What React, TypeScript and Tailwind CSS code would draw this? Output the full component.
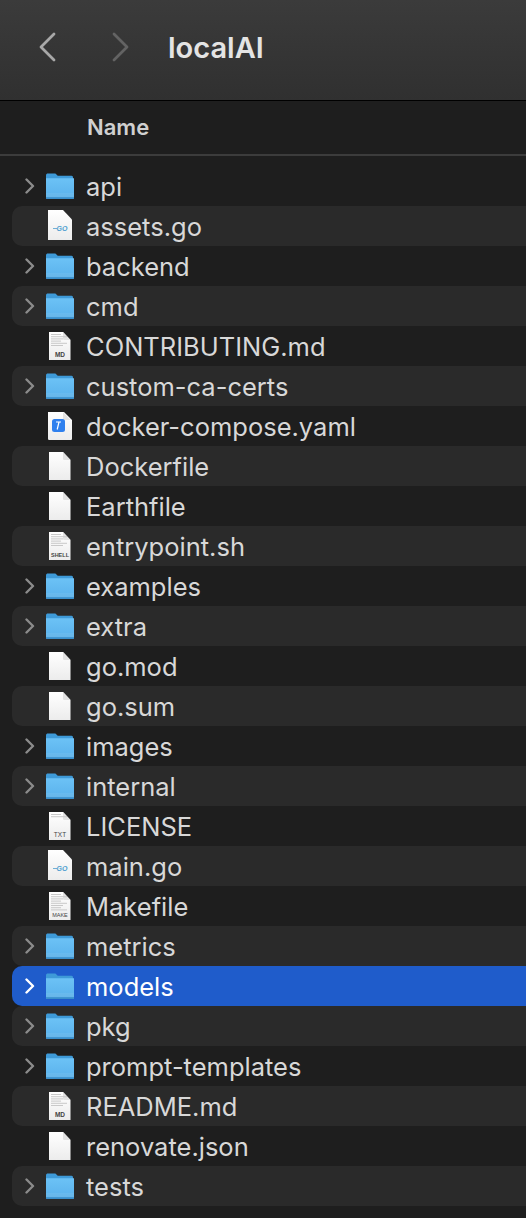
import clsx from "clsx";

type Kind = "folder" | "go" | "md" | "yaml" | "blank" | "shell" | "txt" | "make";

const files: { name: string; kind: Kind }[] = [
  { name: "api", kind: "folder" },
  { name: "assets.go", kind: "go" },
  { name: "backend", kind: "folder" },
  { name: "cmd", kind: "folder" },
  { name: "CONTRIBUTING.md", kind: "md" },
  { name: "custom-ca-certs", kind: "folder" },
  { name: "docker-compose.yaml", kind: "yaml" },
  { name: "Dockerfile", kind: "blank" },
  { name: "Earthfile", kind: "blank" },
  { name: "entrypoint.sh", kind: "shell" },
  { name: "examples", kind: "folder" },
  { name: "extra", kind: "folder" },
  { name: "go.mod", kind: "blank" },
  { name: "go.sum", kind: "blank" },
  { name: "images", kind: "folder" },
  { name: "internal", kind: "folder" },
  { name: "LICENSE", kind: "txt" },
  { name: "main.go", kind: "go" },
  { name: "Makefile", kind: "make" },
  { name: "metrics", kind: "folder" },
  { name: "models", kind: "folder" },
  { name: "pkg", kind: "folder" },
  { name: "prompt-templates", kind: "folder" },
  { name: "README.md", kind: "md" },
  { name: "renovate.json", kind: "blank" },
  { name: "tests", kind: "folder" },
];

const FolderIcon = ({ id }: { id: string }) => (
  <svg width="30" height="30" viewBox="0 0 30 30" className="shrink-0">
    <defs>
      <linearGradient id={id} x1="0" y1="0" x2="0" y2="1">
        <stop offset="0" stopColor="#6cc2f6" />
        <stop offset="0.7" stopColor="#5fb6ee" />
        <stop offset="1" stopColor="#56aae2" />
      </linearGradient>
    </defs>
    <path
      d="M1 4.500C1 3.100 1.800 2.500 3 2.500h6.500c1 0 1.500.4 2.200 1.200l1 1.100h13.800c1.200 0 1.500.8 1.500 2V10H1z"
      fill="#3e9ad8"
    />
    <path
      d="M1 7.200h28v19.300c0 1-.6 1.500-1.500 1.500h-25C1.600 28 1 27.500 1 26.500z"
      fill={`url(#${id})`}
    />
    <rect x="1" y="22.500" width="28" height="1" fill="#8ccdf3" opacity="0.5" />
    <rect x="1" y="24.500" width="28" height="1" fill="#8ccdf3" opacity="0.6" />
    <path d="M1 26.200h28v.6c0 .8-.6 1.200-1.500 1.200h-25c-.9 0-1.500-.4-1.500-1.200z" fill="#3a8fcb" />
  </svg>
);

const lineRows = [0, 1, 2, 3, 4, 5, 6, 7];

const DocIcon = ({ kind, id }: { kind: Kind; id: string }) => {
  const label =
    kind === "md" ? "MD" : kind === "shell" ? "SHELL" : kind === "txt" ? "TXT" : kind === "make" ? "MAKE" : "";
  const outline =
    kind === "go"
      ? "M3 -1H18l9 9.500V29H3z"
      : kind === "yaml"
        ? "M3 1H19l8 8V27.500c0 1-.6 1.500-1.500 1.500H4.500C3.600 29 3 28.500 3 27.500z"
        : "M4 1H18l7.500 8V29H4z";
  return (
    <svg width="30" height="30" viewBox="0 0 30 30" className="shrink-0 overflow-visible">
      <defs>
        <linearGradient id={id} x1="0" y1="0" x2="0" y2="1">
          <stop offset="0" stopColor="#ffffff" />
          <stop offset="1" stopColor="#ececec" />
        </linearGradient>
      </defs>
      <path d={outline} fill={`url(#${id})`} />
      {kind !== "go" && <path d="M18 1l7.500 8H19.500c-1 0-1.500-.5-1.500-1.500z" fill="#e2e2e2" />}
      {label &&
        lineRows.slice(0, kind === "txt" ? 2 : kind === "make" ? 8 : 6).map((r) => (
          <rect
            key={r}
            x="6"
            y={3 + r * 2.200}
            width={r % 3 === 0 ? 10 : r % 3 === 1 ? 16 : 12}
            height="1"
            fill="#c9c9c9"
          />
        ))}
      {label && (
        <text
          x="15"
          y="26"
          textAnchor="middle"
          fontFamily="'Liberation Sans', sans-serif"
          fontWeight={kind === "md" || kind === "shell" ? 700 : 400}
          fontSize={label.length > 3 ? 5.500 : 6.500}
          fill="#444444"
        >
          {label}
        </text>
      )}
      {kind === "go" && (
        <text
          x="17"
          y="20"
          textAnchor="middle"
          fontFamily="'Liberation Sans', sans-serif"
          fontWeight="700"
          fontStyle="italic"
          fontSize="7"
          fill="#4f9fd0"
        >
          GO
        </text>
      )}
      {kind === "go" && <rect x="8" y="17" width="4" height="0.800" fill="#4f9fd0" />}
      {kind === "yaml" && (
        <>
          <rect x="7" y="8" width="13" height="13" rx="2.500" fill="#2f80ee" />
          <path d="M11 11h5M14 11l-1.800 7.500" stroke="#fff" strokeWidth="1.200" fill="none" />
        </>
      )}
    </svg>
  );
};

const Chevron = ({ active }: { active: boolean }) => (
  <svg width="12" height="16" viewBox="0 0 12 16" className="shrink-0">
    <path
      d="M3.500 1.500l6.500 6.500-6.500 6.500"
      fill="none"
      stroke={active ? "#ffffff" : "#8b8b8b"}
      strokeWidth="2.400"
      strokeLinecap="round"
      strokeLinejoin="round"
    />
  </svg>
);

export default function App() {
  return (
    <div className="h-[1218px] w-[526px] overflow-hidden bg-[#1e1e1e] font-['Inter','Liberation_Sans',sans-serif]">
      <header className="flex h-[101px] items-start gap-[47px] border-b border-black bg-gradient-to-b from-[#3b3b3b] to-[#303030] pl-[38px] pt-[32px]">
        <svg width="18" height="30" viewBox="0 0 18 30" className="shrink-0">
          <path d="M16 2L3 15l13 13" fill="none" stroke="#a8a8a8" strokeWidth="2.800" strokeLinecap="round" strokeLinejoin="round" />
        </svg>
        <svg width="18" height="30" viewBox="0 0 18 30" className="ml-[8px] shrink-0">
          <path d="M3 2l13 13L3 28" fill="none" stroke="#636363" strokeWidth="2.800" strokeLinecap="round" strokeLinejoin="round" />
        </svg>
        <h1 className="ml-[-8px] text-[29px] font-semibold leading-[32px] text-[#e4e4e4]">localAI</h1>
      </header>
      <div className="flex h-[55px] items-center border-b-2 border-[#3c3c3c] pl-[87px] text-[22px] font-semibold text-[#d0d0d0]">
        Name
      </div>
      <div className="flex flex-col pl-[12px] pt-[10px]">
        {files.map((f, i) => {
          const active = f.name === "models";
          return (
            <div
              key={f.name}
              className={clsx(
                "flex h-[40px] items-center rounded-l-[10px] pl-[11px] text-[25.500px]",
                active ? "bg-[#1f5ccb] text-white" : i % 2 === 1 ? "bg-[#2a2a2a] text-[#d8d8d8]" : "text-[#d8d8d8]",
              )}
            >
              <div className="flex w-[22px] shrink-0">{f.kind === "folder" && <Chevron active={active} />}</div>
              {f.kind === "folder" ? <FolderIcon id={`folder-${i}`} /> : <DocIcon kind={f.kind} id={`doc-${i}`} />}
              <span className="ml-[11px] pt-[2px]">{f.name}</span>
            </div>
          );
        })}
      </div>
    </div>
  );
}
